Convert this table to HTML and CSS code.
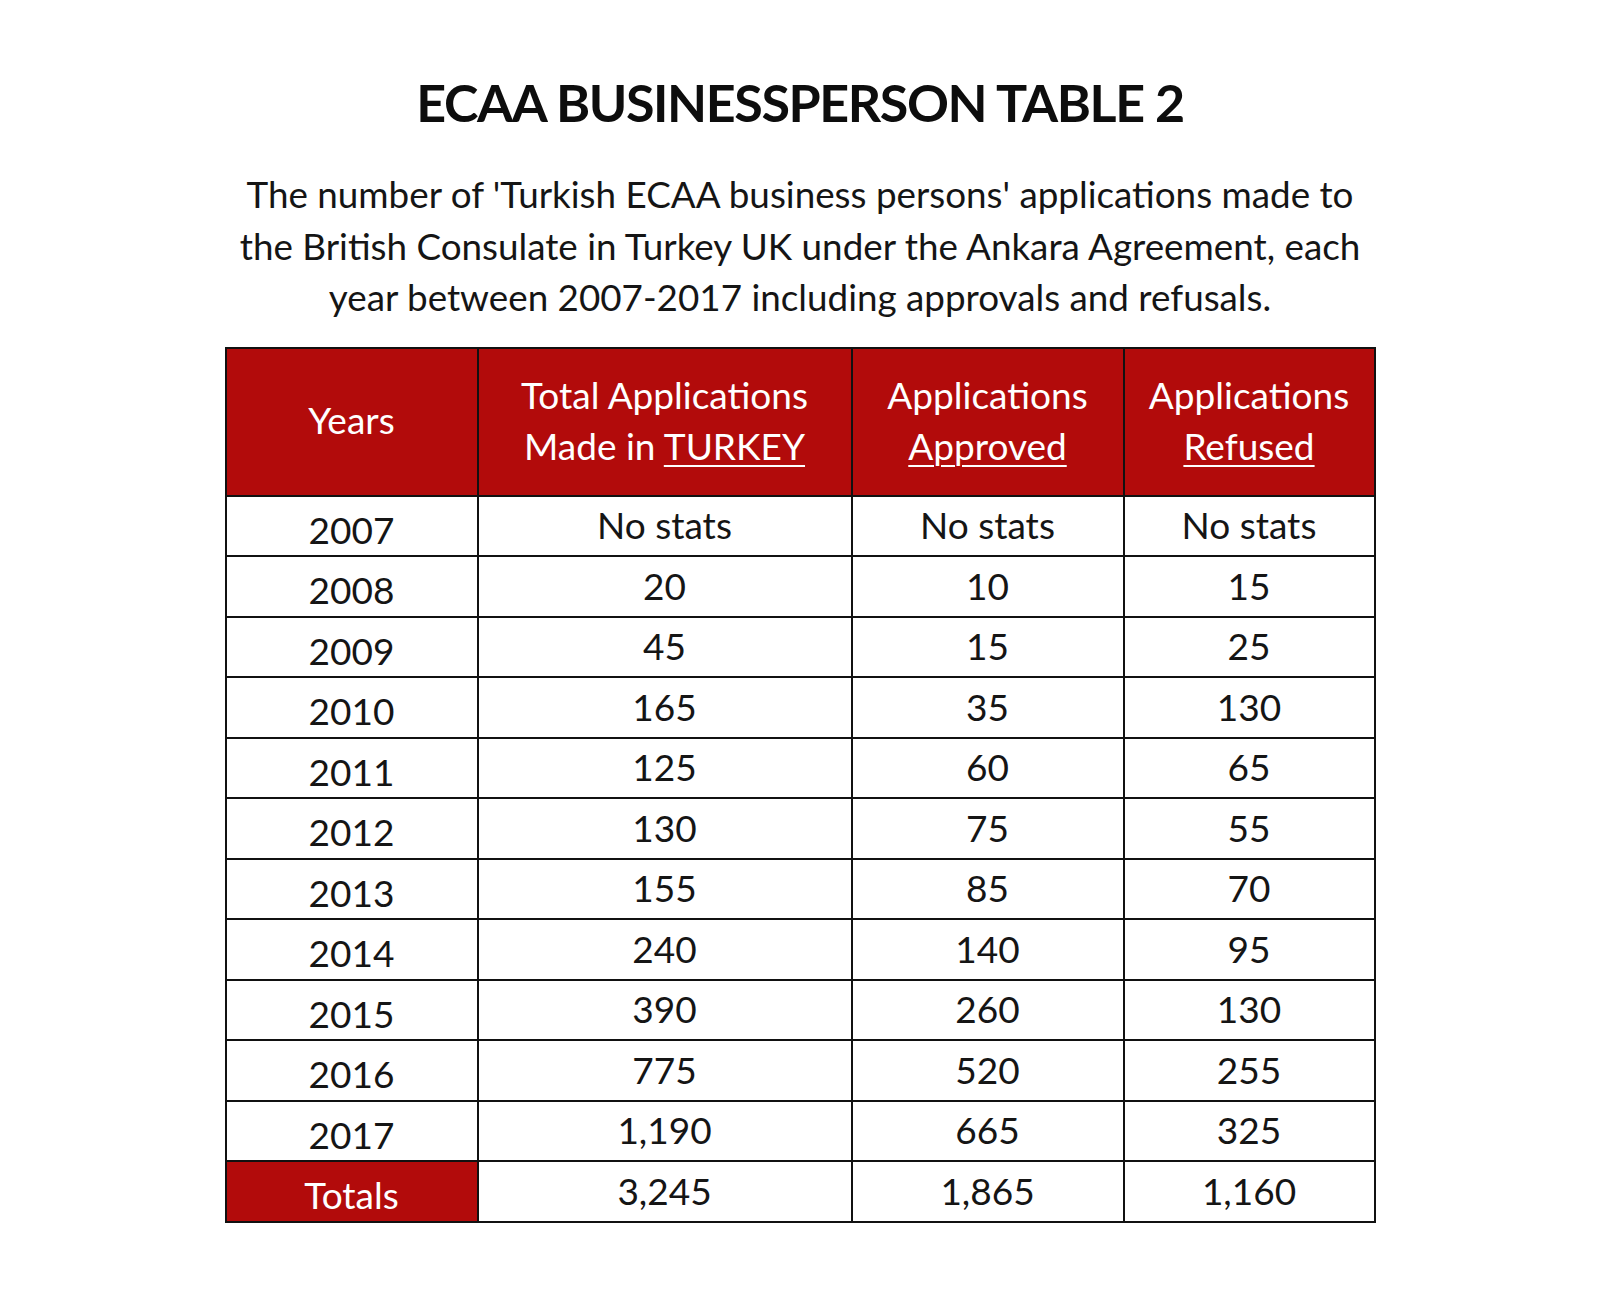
FILE: index.html
```html
<!DOCTYPE html>
<html lang="en">
<head>
<meta charset="utf-8">
<title>ECAA Businessperson Table 2</title>
<link rel="stylesheet" href="styles.css">
</head>
<body>
<main class="page">
  <h1 class="title">ECAA BUSINESSPERSON TABLE 2</h1>
  <p class="intro">The number of 'Turkish ECAA business persons' applications made to<br>the British Consulate in Turkey UK under the Ankara Agreement, each<br>year between 2007-2017 including approvals and refusals.</p>
  <table class="stats">
    <colgroup>
      <col class="c-year">
      <col class="c-total">
      <col class="c-appr">
      <col class="c-ref">
    </colgroup>
    <thead>
      <tr>
        <th>Years</th>
        <th>Total Applications<br>Made in <u>TURKEY</u></th>
        <th>Applications<br><u>Approved</u></th>
        <th>Applications<br><u>Refused</u></th>
      </tr>
    </thead>
    <tbody>
      <tr><td class="year">2007</td><td>No stats</td><td>No stats</td><td>No stats</td></tr>
      <tr><td class="year">2008</td><td>20</td><td>10</td><td>15</td></tr>
      <tr><td class="year">2009</td><td>45</td><td>15</td><td>25</td></tr>
      <tr><td class="year">2010</td><td>165</td><td>35</td><td>130</td></tr>
      <tr><td class="year">2011</td><td>125</td><td>60</td><td>65</td></tr>
      <tr><td class="year">2012</td><td>130</td><td>75</td><td>55</td></tr>
      <tr><td class="year">2013</td><td>155</td><td>85</td><td>70</td></tr>
      <tr><td class="year">2014</td><td>240</td><td>140</td><td>95</td></tr>
      <tr><td class="year">2015</td><td>390</td><td>260</td><td>130</td></tr>
      <tr><td class="year">2016</td><td>775</td><td>520</td><td>255</td></tr>
      <tr><td class="year">2017</td><td>1,190</td><td>665</td><td>325</td></tr>
      <tr><td class="year totals">Totals</td><td>3,245</td><td>1,865</td><td>1,160</td></tr>
    </tbody>
  </table>
</main>
</body>
</html>
```

FILE: styles.css
```css
html, body {
  margin: 0;
  padding: 0;
  background: #ffffff;
}

body {
  font-family: Lato, "Liberation Sans", sans-serif;
  color: #111111;
}

.page {
  width: 1600px;
  display: flex;
  flex-direction: column;
  align-items: center;
  padding-top: 70px;
}

.title {
  margin: 0;
  font-size: 52px;
  line-height: 64px;
  font-weight: 700;
  letter-spacing: -1.4px;
  color: #0d0d0d;
}

.intro {
  margin: 35px 0 0;
  font-size: 36.8px;
  line-height: 51.5px;
  text-align: center;
  color: #151515;
}

.stats {
  margin-top: 23px;
  border-collapse: collapse;
  table-layout: fixed;
  width: 1149px;
  font-size: 37px;
}

.c-year { width: 252px; }
.c-total { width: 374px; }
.c-appr { width: 272px; }
.c-ref { width: 251px; }

.stats th,
.stats td {
  border: 2px solid #111111;
  text-align: center;
  padding: 0;
}

.stats th {
  height: 142px;
  background: #b20b0b;
  color: #ffffff;
  font-weight: 400;
  line-height: 51px;
  padding-bottom: 4px;
}

.stats th u {
  text-decoration-thickness: 2px;
  text-underline-offset: 5px;
}

.stats td {
  height: 57.5px;
  line-height: 40px;
  color: #151515;
  padding-bottom: 1px;
}

.stats td.year {
  height: 50.5px;
  padding-bottom: 0;
  padding-top: 8px;
}

.stats td.totals {
  background: #b20b0b;
  color: #ffffff;
}
```
